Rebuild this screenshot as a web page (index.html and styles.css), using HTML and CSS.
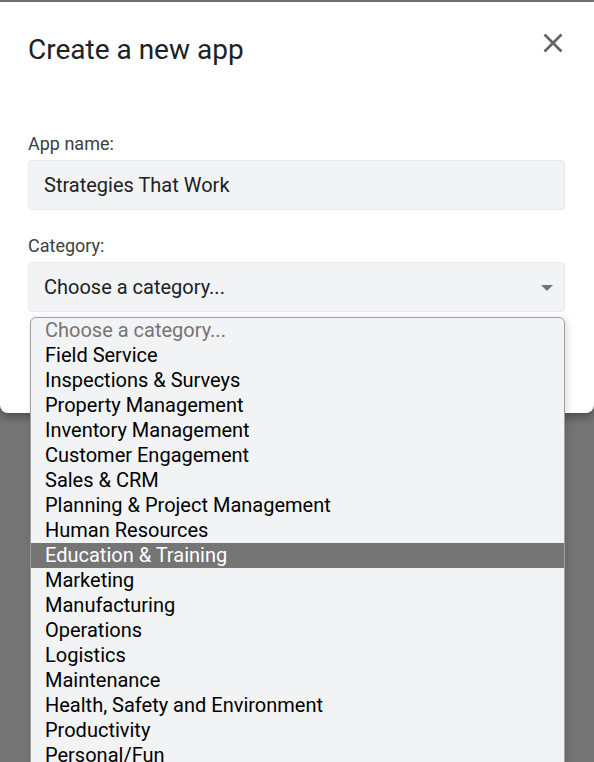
FILE: index.html
```html
<!DOCTYPE html>
<html>
<head>
<meta charset="utf-8">
<link rel="stylesheet" href="styles.css">
</head>
<body>
<div class="dialog">
  <div class="header">
    <h1 class="title">Create a new app</h1>
    <button class="close" aria-label="Close">
      <svg viewBox="0 0 24 24" width="24" height="24"><path d="M3.5 3.5 L20.5 20.5 M20.5 3.5 L3.5 20.5" stroke="#5f6368" stroke-width="2.6" fill="none"/></svg>
    </button>
  </div>
  <div class="field first">
    <div class="label">App name:</div>
    <div class="input">Strategies That Work</div>
  </div>
  <div class="field">
    <div class="label">Category:</div>
    <div class="select">
      <span>Choose a category...</span>
      <span class="arrow"></span>
    </div>
  </div>
</div>
<ul class="listbox">
  <li class="placeholder">Choose a category...</li>
  <li>Field Service</li>
  <li>Inspections &amp; Surveys</li>
  <li>Property Management</li>
  <li>Inventory Management</li>
  <li>Customer Engagement</li>
  <li>Sales &amp; CRM</li>
  <li>Planning &amp; Project Management</li>
  <li>Human Resources</li>
  <li class="active">Education &amp; Training</li>
  <li>Marketing</li>
  <li>Manufacturing</li>
  <li>Operations</li>
  <li>Logistics</li>
  <li>Maintenance</li>
  <li>Health, Safety and Environment</li>
  <li>Productivity</li>
  <li>Personal/Fun</li>
</ul>
</body>
</html>
```
FILE: styles.css
```css
* { box-sizing: border-box; }
html, body {
  margin: 0;
  padding: 0;
  width: 594px;
  height: 762px;
  overflow: hidden;
  background: #757575;
  font-family: Roboto, "Noto Sans", sans-serif;
}
body { position: relative; padding-top: 2px; }
.dialog {
  background: #fff;
  height: 411px;
  border-radius: 0 0 8px 8px;
  padding: 0 29px 0 28px;
  box-shadow: 0 4px 10px rgba(0,0,0,0.35);
}
.header {
  display: flex;
  justify-content: space-between;
  align-items: flex-start;
  padding-top: 29px;
}
.title {
  margin: 2px 0 0 0;
  font-size: 28px;
  line-height: 34px;
  font-weight: 400;
  color: #202124;
  letter-spacing: 0;
}
.close {
  width: 24px;
  height: 24px;
  padding: 0;
  border: 0;
  background: none;
  display: flex;
}
.field { display: flex; flex-direction: column; }
.field.first { margin-top: 67px; }
.field + .field { margin-top: 26px; }
.label {
  font-size: 18px;
  line-height: 20px;
  color: #3c4043;
  margin-bottom: 6px;
}
.input, .select {
  height: 50px;
  background: #f1f3f4;
  border: 1px solid #e8eaed;
  border-radius: 4px;
  padding: 0 15px;
  display: flex;
  align-items: center;
  font-size: 20px;
  color: #202124;
}
.select { justify-content: space-between; }
.arrow {
  width: 0;
  height: 0;
  border-left: 6px solid transparent;
  border-right: 6px solid transparent;
  border-top: 6px solid #757575;
  margin-right: -4px;
  margin-top: 2px;
}
.listbox {
  position: absolute;
  left: 30px;
  top: 317px;
  width: 535px;
  margin: 0;
  padding: 0;
  list-style: none;
  background: #f1f3f5;
  border: 1px solid #9aa0a6;
  border-radius: 6px 6px 0 0;
  box-shadow: 2px 2px 8px rgba(0,0,0,0.15);
}
.listbox li {
  height: 25px;
  line-height: 25px;
  padding-left: 14px;
  font-size: 20px;
  color: #000;
}
.listbox li.placeholder { color: #757575; }
.listbox li.active { background: #757575; color: #fff; }
```
